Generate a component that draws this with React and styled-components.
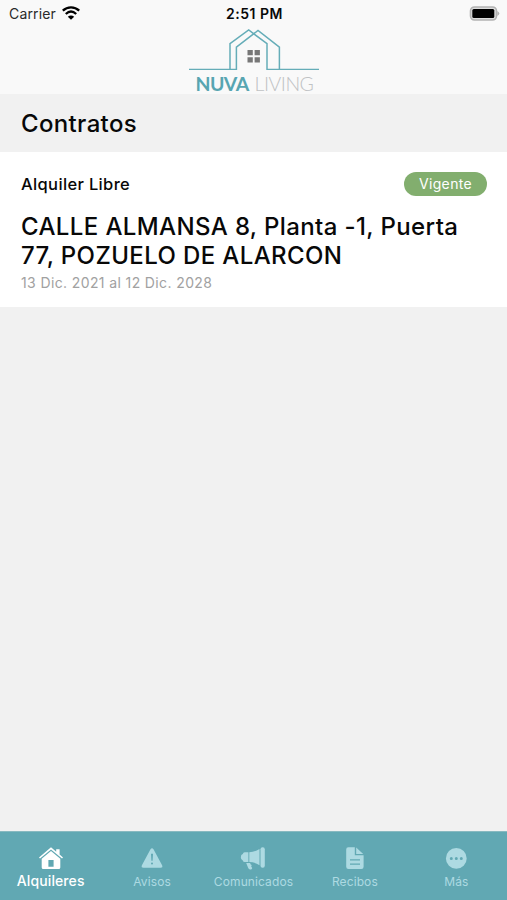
import React from "react"
import styled, { createGlobalStyle } from "styled-components"

const GlobalStyle = createGlobalStyle`
	* {
		box-sizing: border-box;
		margin: 0;
		padding: 0;
	}
	body {
		font-family: Inter, "Liberation Sans", sans-serif;
		background: #f1f1f1;
		color: #080808;
	}
`

const Screen = styled.div`
	display: flex;
	flex-direction: column;
	height: 900px;
	width: 507px;
	overflow: hidden;
	background: #f1f1f1;
`

const Header = styled.header`
	flex: none;
	height: 94px;
	background: #f9f9f9;
`

const StatusBar = styled.div`
	display: grid;
	grid-template-columns: 1fr auto 1fr;
	align-items: center;
	height: 28px;
	padding: 0 7px 2px 9px;
`

const Carrier = styled.div`
	display: flex;
	align-items: center;
	gap: 6px;
	font-size: 14px;
	letter-spacing: 0.15px;
	color: #2a2a2a;
`

const Clock = styled.div`
	font-size: 14px;
	font-weight: 600;
	letter-spacing: 0.5px;
`

const Battery = styled.div`
	display: flex;
	justify-content: flex-end;
`

const Logo = styled.div`
	display: flex;
	flex-direction: column;
	align-items: center;
`

const Brand = styled.div`
	display: flex;
	gap: 6px;
	margin: 3px 0 0 2px;
	font-family: Lato, sans-serif;
	font-size: 19.5px;
	line-height: 22px;
`

const BrandWord = styled.span`
	font-weight: ${({ $light }) => ($light ? 300 : 700)};
	color: ${({ $light }) => ($light ? "#c0c2c4" : "#57a5b1")};
	letter-spacing: ${({ $light }) => ($light ? "-0.5px" : "-0.6px")};
`

const PageTitle = styled.h1`
	flex: none;
	height: 58px;
	padding-left: 21px;
	font-size: 24px;
	font-weight: 450;
	line-height: 59px;
	letter-spacing: 0.35px;
`

const Contract = styled.article`
	flex: none;
	height: 155px;
	padding: 20px 20px 0 21px;
	background: #fff;
`

const ContractHeader = styled.div`
	display: flex;
	align-items: center;
	justify-content: space-between;
	height: 24px;
`

const ContractType = styled.h3`
	font-size: 16.5px;
	font-weight: 500;
	letter-spacing: 0.35px;
`

const Badge = styled.span`
	width: 83px;
	height: 24px;
	border-radius: 12px;
	background: #82ae6e;
	color: #fff;
	font-size: 14px;
	line-height: 24px;
	letter-spacing: 0.35px;
	text-align: center;
`

const Address = styled.h2`
	margin-top: 16px;
	font-size: 24px;
	font-weight: 450;
	line-height: 29px;
	letter-spacing: 0.38px;
	white-space: nowrap;
`

const Dates = styled.p`
	margin-top: 3px;
	font-size: 14px;
	line-height: 20px;
	letter-spacing: 0.38px;
	color: #a1a1a1;
`

const TabBar = styled.nav`
	flex: none;
	display: grid;
	grid-template-columns: repeat(5, 1fr);
	height: 69px;
	margin-top: auto;
	border-top: 1px solid #88b9c0;
	background: #61a8b3;
`

const Tab = styled.a`
	display: flex;
	flex-direction: column;
	align-items: center;
	padding-top: 14px;
	color: ${({ $active }) => ($active ? "#fff" : "#addae2")};
	font-size: ${({ $active }) => ($active ? "14px" : "12px")};
	font-weight: ${({ $active }) => ($active ? 500 : 400)};
	line-height: ${({ $active }) => ($active ? "22px" : "24px")};
	letter-spacing: 0.1px;
	svg {
		flex: none;
	}
`

const Wifi = () => (
	<svg width="18" height="14" viewBox="0 0 18 14">
		<g fill="none" stroke="#000" strokeWidth="2.3">
			<path d="M.8 4.7C5.5.2 12.5.2 17.2 4.7" />
			<path d="M3.8 8C7 5 11 5 14.2 8" />
		</g>
		<path d="M5.8 10.7C7.8 9 10.2 9 12.2 10.7L9 13.8z" fill="#000" />
	</svg>
)

const BatteryIcon = () => (
	<svg width="31" height="15" viewBox="0 0 31 15">
		<rect x="1.5" y="1" width="26" height="13" rx="4" fill="#ddd" stroke="#b2b2b2" strokeWidth="1.6" />
		<rect x="3.3" y="3" width="22" height="9" rx="1.5" fill="#000" />
		<path d="M28.3 5q4 2.5 0 5z" fill="#b2b2b2" />
	</svg>
)

const House = () => (
	<svg width="130" height="42" viewBox="0 0 130 42">
		<g fill="none" stroke="#65adb8" strokeWidth="1.5">
			<path d="M0 41.5H47.4V19.2L69 2.5L90.4 19.2V41.5" />
			<path d="M41 41.5V15.7L59.7 2L78 15.7V41.5H130" />
		</g>
		<path d="M58.5 22h5.3v5.3h-5.3zM65.6 22h5.3v5.3h-5.3zM58.5 29.2h5.3v5.3h-5.3zM65.6 29.2h5.3v5.3h-5.3z" fill="#777" />
	</svg>
)

const HomeIcon = () => (
	<svg width="26" height="24" viewBox="0 0 26 24" fill="currentColor">
		<path d="M1 11.4L13 1.3l5.2 4.4V3.2h3.4v5.4L25 11.4l-1 1.2L13 3.4 2 12.6z" />
		<path fillRule="evenodd" d="M3.7 12.7L13 5l9.3 7.7v8.7q0 1.6-1.6 1.6H5.3q-1.6 0-1.6-1.6zM10.4 14v6.8h5.2V14z" />
	</svg>
)

const WarningIcon = () => (
	<svg width="26" height="24" viewBox="0 0 26 24" fill="currentColor">
		<path fillRule="evenodd" d="M11.5 3.3q1.5-2.2 3 0l8.6 16q1 2.5-1.5 2.5H4.4q-2.5 0-1.5-2.5zM12 7.7l.4 7h1.2l.4-7zM13 16.4a1 1 0 100 2 1 1 0 000-2z" />
	</svg>
)

const MegaphoneIcon = () => (
	<svg width="26" height="24" viewBox="0 0 26 24" fill="currentColor">
		<rect x="20.5" y="1.2" width="4.3" height="20.5" rx="2" />
		<path d="M9.3 6.3Q14.5 6.2 19.5 3v16.2Q14.5 16 9.3 16z" />
		<path d="M8.4 6.3v9.7H4.7q-1.6 0-1.9-1.6Q.8 14 .8 11.2T2.8 8q.3-1.7 1.9-1.7zM6.2 17h3.9l.6 1.5 1 .5-.5 1.5 1 1.5q-.3 1.8-2.1 1.5-1.4 0-2-1.7z" />
	</svg>
)

const DocumentIcon = () => (
	<svg width="26" height="24" viewBox="0 0 26 24" fill="currentColor">
		<path fillRule="evenodd" d="M6.3 1.2h6.5v8h8.8v11.5q0 2.3-2.2 2.3H6.5q-2.3 0-2.3-2.3V3.4q0-2.2 2.1-2.2zM8 13.2v1.2h10v-1.2zM8 17.6v1.2h10v-1.2z" />
		<path d="M14.2 1.5l7 6.5h-7z" />
	</svg>
)

const MoreIcon = () => (
	<svg width="26" height="24" viewBox="0 0 26 24" fill="currentColor">
		<path fillRule="evenodd" d="M13.3 2a10.4 10.4 0 100 20.8 10.4 10.4 0 000-20.8zM8.3 10.9a1.5 1.5 0 110 3 1.5 1.5 0 010-3zM13.3 10.9a1.5 1.5 0 110 3 1.5 1.5 0 010-3zM18.3 10.9a1.5 1.5 0 110 3 1.5 1.5 0 010-3z" />
	</svg>
)

const tabs = [
	{ name: "Alquileres", icon: HomeIcon, active: true },
	{ name: "Avisos", icon: WarningIcon },
	{ name: "Comunicados", icon: MegaphoneIcon },
	{ name: "Recibos", icon: DocumentIcon },
	{ name: "Más", icon: MoreIcon },
]

function renderTabs() {
	return tabs.map(({ name, icon: Icon, active }) => (
		<Tab key={name} $active={active}>
			<Icon />
			{name}
		</Tab>
	))
}

const App = () => (
	<React.Fragment>
		<GlobalStyle />
		<Screen>
			<Header>
				<StatusBar>
					<Carrier>
						Carrier
						<Wifi />
					</Carrier>
					<Clock>2:51 PM</Clock>
					<Battery>
						<BatteryIcon />
					</Battery>
				</StatusBar>
				<Logo>
					<House />
					<Brand>
						<BrandWord>NUVA</BrandWord>
						<BrandWord $light>LIVING</BrandWord>
					</Brand>
				</Logo>
			</Header>
			<PageTitle>Contratos</PageTitle>
			<Contract>
				<ContractHeader>
					<ContractType>Alquiler Libre</ContractType>
					<Badge>Vigente</Badge>
				</ContractHeader>
				<Address>
					CALLE ALMANSA 8, Planta -1, Puerta
					<br />
					77, POZUELO DE ALARCON
				</Address>
				<Dates>13 Dic. 2021 al 12 Dic. 2028</Dates>
			</Contract>
			<TabBar>{renderTabs()}</TabBar>
		</Screen>
	</React.Fragment>
)

export default App
